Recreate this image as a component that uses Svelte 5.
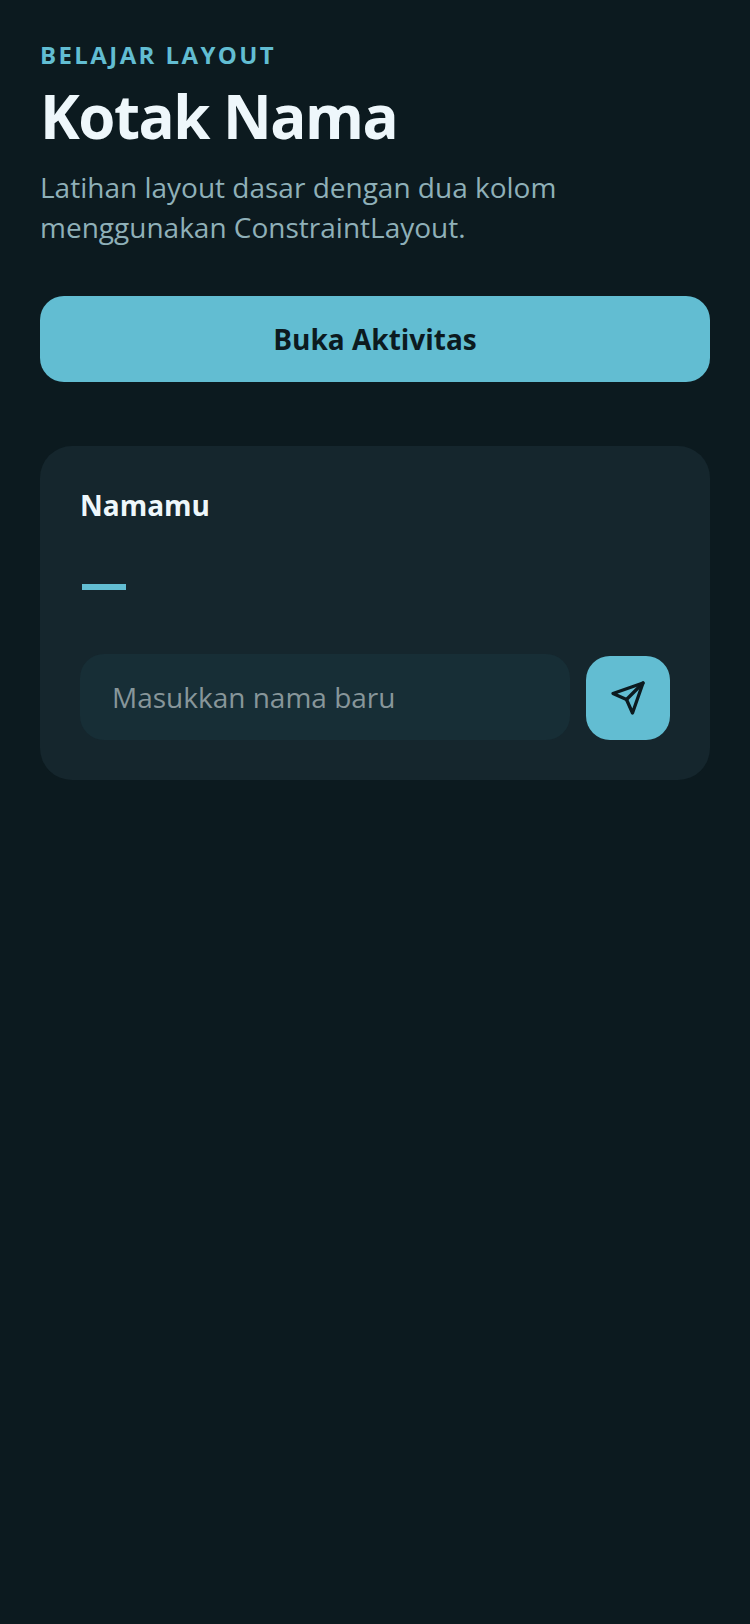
<script>
  let nama = $state('');
</script>

<main class="page">
  <header class="head">
    <p class="eyebrow">BELAJAR LAYOUT</p>
    <h1>Kotak Nama</h1>
    <p class="sub">Latihan layout dasar dengan dua kolom menggunakan ConstraintLayout.</p>
  </header>

  <button class="open-btn">Buka Aktivitas</button>

  <section class="card">
    <h2>Namamu</h2>
    <div class="dash"></div>
    <div class="row">
      <input type="text" bind:value={nama} placeholder="Masukkan nama baru" />
      <button class="send-btn" aria-label="Kirim">
        <svg width="36" height="36" viewBox="0 0 24 24" fill="none" stroke="currentColor" stroke-width="2.2" stroke-linecap="round" stroke-linejoin="round">
          <line x1="22" y1="2" x2="11" y2="13" />
          <polygon points="22 2 15 22 11 13 2 9 22 2" />
        </svg>
      </button>
    </div>
  </section>
</main>

<style>
  :global(body) {
    margin: 0;
    background: #0c1a1f;
  }

  .page {
    box-sizing: border-box;
    min-height: 1624px;
    padding: 40px 40px 0;
    background: #0c1a1f;
    font-family: "Open Sans", sans-serif;
  }

  .eyebrow {
    margin: 0;
    font-size: 24px;
    line-height: 30px;
    font-weight: 700;
    letter-spacing: 2.4px;
    color: #62bdd2;
  }

  h1 {
    margin: 0;
    font-size: 60px;
    line-height: 93px;
    font-weight: 700;
    letter-spacing: -1.5px;
    color: #eef7fb;
  }

  .sub {
    margin: 4px 0 0;
    font-size: 28px;
    line-height: 40px;
    color: #8fb0b8;
  }

  .open-btn {
    display: block;
    width: 100%;
    height: 86px;
    margin-top: 49px;
    border: none;
    border-radius: 24px;
    background: #62bdd2;
    color: #0c1a1f;
    font: 700 28px "Open Sans", sans-serif;
  }

  .card {
    margin-top: 64px;
    padding: 40px;
    border-radius: 32px;
    background: #15262d;
  }

  h2 {
    margin: 0;
    font-size: 28px;
    line-height: 38px;
    font-weight: 700;
    color: #eef7fb;
  }

  .dash {
    width: 44px;
    height: 6px;
    margin: 60px 0 0 2px;
    background: #62bdd2;
  }

  .row {
    display: flex;
    align-items: flex-end;
    gap: 16px;
    margin-top: 64px;
  }

  input {
    flex: 1;
    min-width: 0;
    box-sizing: border-box;
    height: 86px;
    padding: 0 32px;
    border: none;
    border-radius: 24px;
    background: #172e36;
    color: #eef7fb;
    font: 400 28px "Open Sans", sans-serif;
    outline: none;
  }

  input::placeholder {
    color: #87969a;
    opacity: 1;
  }

  .send-btn {
    display: flex;
    align-items: center;
    justify-content: center;
    flex: none;
    width: 84px;
    height: 84px;
    padding: 0;
    border: none;
    border-radius: 24px;
    background: #62bdd2;
    color: #0c1a1f;
  }
</style>
